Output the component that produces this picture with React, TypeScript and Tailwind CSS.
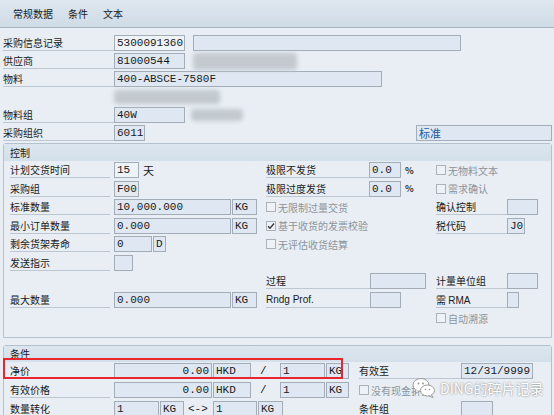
import React from 'react';

type FieldProps = {
  className?: string;
  children?: React.ReactNode;
  right?: boolean;
  tone?: 'blue' | 'gray' | 'light';
};

const Field = ({ className = '', children, right, tone = 'blue' }: FieldProps) => (
  <div
    className={`h-[16px] shrink-0 overflow-hidden whitespace-nowrap border border-[#a3adb7] px-[2px] font-['Liberation_Mono',monospace] text-[11px] leading-[14px] text-[#1a1a1a] ${
      right ? 'text-right' : ''
    } ${tone === 'gray' ? 'bg-[#e6eaee]' : tone === 'light' ? 'bg-[#eef3f8]' : 'bg-[#dfe8f2]'} ${className}`}
  >
    {children}
  </div>
);

const Label = ({ className = '', children }: { className?: string; children?: React.ReactNode }) => (
  <div
    className={`h-[16px] shrink-0 whitespace-nowrap border-b border-[#bcc7d2] text-[10px] leading-[15px] text-[#1a1a1a] ${className}`}
  >
    {children}
  </div>
);

const Check = ({ checked, children }: { checked?: boolean; children: React.ReactNode }) => (
  <div className="flex h-[18.5px] items-center">
    <div className="flex h-[10px] w-[10px] items-center justify-center border border-[#a9b2bb] bg-[#eef2f6]">
      {checked && (
        <svg width="8" height="8" viewBox="0 0 8 8">
          <path d="M1 4.2 L3 6.2 L7 1.5" fill="none" stroke="#333" strokeWidth="1.3" />
        </svg>
      )}
    </div>
    <span className="ml-[2px] text-[10px] leading-[15px] text-[#8d949b]">{children}</span>
  </div>
);

const Blur = ({ className = '' }: { className?: string }) => (
  <div className={`shrink-0 rounded-[4px] bg-[#c3c9cf] blur-[2px] ${className}`} />
);

const Row = ({ className = 'h-[18px]', children }: { className?: string; children?: React.ReactNode }) => (
  <div className={`flex items-center ${className}`}>{children}</div>
);

const SectionHead = ({ title, className = '' }: { title: string; className?: string }) => (
  <div
    className={`bg-gradient-to-b from-[#dde6ef] to-[#d3dfea] pl-[6px] text-[10px] text-[#1a1a1a] ${className}`}
  >
    {title}
  </div>
);

export default function App() {
  return (
    <div className="relative h-[415px] w-[554px] overflow-hidden bg-[#e8eef4] font-['Noto_Sans_CJK_SC',sans-serif]">
      {/* Tabs */}
      <div className="flex h-[28px] items-center gap-[15px] border-b border-[#a6b3c0] bg-gradient-to-b from-[#dfe7ef] to-[#cfdbe6] pl-[13px] text-[10px] text-[#1a1a1a]">
        <span>常规数据</span>
        <span>条件</span>
        <span>文本</span>
      </div>

      {/* Header data */}
      <div className="pl-[3px] pt-[6px]">
        <Row>
          <Label className="w-[111px]">采购信息记录</Label>
          <Field className="w-[71px]" tone="light">5300091360</Field>
          <Field className="ml-[8px] w-[268px]" />
        </Row>
        <Row>
          <Label className="w-[111px]">供应商</Label>
          <Field className="w-[71px]">81000544</Field>
          <Blur className="ml-[8px] h-[17px] w-[104px]" />
        </Row>
        <Row>
          <Label className="w-[111px]">物料</Label>
          <Field className="w-[268px]">400-ABSCE-7580F</Field>
        </Row>
        <Row>
          <div className="w-[111px]" />
          <Blur className="h-[14px] w-[106px]" />
        </Row>
        <Row>
          <Label className="w-[111px]">物料组</Label>
          <Field className="w-[71px]">40W</Field>
          <Blur className="ml-[6px] h-[12px] w-[52px]" />
        </Row>
        <Row>
          <Label className="w-[111px]">采购组织</Label>
          <Field className="w-[31px]">6011</Field>
          <Field className="ml-[271px] w-[136px] font-['Noto_Sans_CJK_SC',sans-serif] text-[10px] text-[#1e5a9c]">
            标准
          </Field>
        </Row>
      </div>

      {/* Control */}
      <div className="ml-[3px] mr-[2px] mt-[1px] rounded-t-[3px] border border-[#b4c2cf]">
        <SectionHead title="控制" className="h-[17px] leading-[17px]" />
        <div className="flex pb-[9px] pl-[6px]">
          <div className="w-[256px] shrink-0">
            <Row className="h-[18.5px]">
              <Label className="mr-[4px] w-[100px]">计划交货时间</Label>
              <Field className="w-[25px]" tone="light">15</Field>
              <span className="ml-[4px] text-[11px] text-[#1a1a1a]">天</span>
            </Row>
            <Row className="h-[18.5px]">
              <Label className="mr-[4px] w-[100px]">采购组</Label>
              <Field className="w-[25px]" tone="gray">F00</Field>
            </Row>
            <Row className="h-[18.5px]">
              <Label className="mr-[4px] w-[100px]">标准数量</Label>
              <Field className="w-[117px]">10,000.000</Field>
              <Field className="ml-[1px] w-[25px]">KG</Field>
            </Row>
            <Row className="h-[18.5px]">
              <Label className="mr-[4px] w-[100px]">最小订单数量</Label>
              <Field className="w-[117px]">0.000</Field>
              <Field className="ml-[1px] w-[25px]">KG</Field>
            </Row>
            <Row className="h-[18.5px]">
              <Label className="mr-[4px] w-[100px]">剩余货架寿命</Label>
              <Field className="w-[38px]">0</Field>
              <Field className="ml-[1px] w-[13px]">D</Field>
            </Row>
            <Row className="h-[18.5px]">
              <Label className="mr-[4px] w-[100px]">发送指示</Label>
              <Field className="w-[19px]" />
            </Row>
            <Row className="h-[18.5px]" />
            <Row className="h-[18.5px]">
              <Label className="mr-[4px] w-[100px]">最大数量</Label>
              <Field className="w-[117px]">0.000</Field>
              <Field className="ml-[1px] w-[25px]">KG</Field>
            </Row>
            <Row className="h-[18.5px]" />
          </div>

          <div className="w-[170px] shrink-0">
            <Row className="h-[18.5px]">
              <Label className="w-[103px]">极限不发货</Label>
              <Field className="w-[32px]">0.0</Field>
              <span className="ml-[4px] text-[9px] font-bold text-[#333]">%</span>
            </Row>
            <Row className="h-[18.5px]">
              <Label className="w-[103px]">极限过度发货</Label>
              <Field className="w-[32px]">0.0</Field>
              <span className="ml-[4px] text-[9px] font-bold text-[#333]">%</span>
            </Row>
            <Check>无限制过量交货</Check>
            <Check checked>基于收货的发票校验</Check>
            <Check>无评估收货结算</Check>
            <Row className="h-[18.5px]" />
            <Row className="h-[18.5px]">
              <Label className="w-[104px]">过程</Label>
              <Field className="w-[56px]" />
            </Row>
            <Row className="h-[18.5px]">
              <Label className="w-[104px] font-['Liberation_Sans',sans-serif]">Rndg Prof.</Label>
              <Field className="w-[31px]" />
            </Row>
          </div>

          <div className="flex-1">
            <Check>无物料文本</Check>
            <Check>需求确认</Check>
            <Row className="h-[18.5px]">
              <Label className="w-[71px]">确认控制</Label>
              <Field className="w-[31px]" />
            </Row>
            <Row className="h-[18.5px]">
              <Label className="w-[71px]">税代码</Label>
              <Field className="w-[18px]">J0</Field>
            </Row>
            <Row className="h-[18.5px]" />
            <Row className="h-[18.5px]" />
            <Row className="h-[18.5px]">
              <Label className="w-[71px]">计量单位组</Label>
              <Field className="w-[31px]" />
            </Row>
            <Row className="h-[18.5px]">
              <Label className="w-[71px]">
                需 <span className="font-['Liberation_Sans',sans-serif]">RMA</span>
              </Label>
              <Field className="w-[12px]" />
            </Row>
            <Check>自动溯源</Check>
          </div>
        </div>
      </div>

      {/* Conditions */}
      <div className="ml-[3px] mr-[2px] mt-[7px] rounded-t-[3px] border border-[#b4c2cf]">
        <SectionHead title="条件" className="h-[16px] leading-[16px]" />
        <div className="flex pl-[6px]">
          <div className="w-[349px] shrink-0">
            <Row className="h-[19px]">
              <Label className="mr-[4px] w-[100px]">净价</Label>
              <Field className="w-[98px]" right>0.00</Field>
              <Field className="ml-[1px] w-[38px]">HKD</Field>
              <span className="ml-[9px] w-[11px] font-['Liberation_Mono',monospace] text-[11px] text-[#1a1a1a]">/</span>
              <Field className="ml-[9px] w-[45px]">1</Field>
              <Field className="ml-[1px] w-[23px]">KG</Field>
            </Row>
            <Row className="h-[19px]">
              <Label className="mr-[4px] w-[100px]">有效价格</Label>
              <Field className="w-[98px]" right>0.00</Field>
              <Field className="ml-[1px] w-[38px]">HKD</Field>
              <span className="ml-[9px] w-[11px] font-['Liberation_Mono',monospace] text-[11px] text-[#1a1a1a]">/</span>
              <Field className="ml-[9px] w-[45px]">1</Field>
              <Field className="ml-[1px] w-[23px]">KG</Field>
            </Row>
            <Row className="h-[19px]">
              <Label className="mr-[4px] w-[100px]">数量转化</Label>
              <Field className="w-[45px]">1</Field>
              <Field className="ml-[1px] w-[24px]">KG</Field>
              <span className="ml-[4px] w-[25px] font-['Liberation_Mono',monospace] text-[11px] text-[#1a1a1a]">
                {'<->'}
              </span>
              <Field className="w-[44px]">1</Field>
              <Field className="ml-[1px] w-[25px]">KG</Field>
            </Row>
          </div>
          <div className="flex-1">
            <Row className="h-[19px]">
              <Label className="w-[102px]">有效至</Label>
              <Field className="w-[72px]">12/31/9999</Field>
            </Row>
            <div className="flex h-[19px] items-center">
              <Check>没有现金折扣</Check>
            </div>
            <Row className="h-[19px]">
              <Label className="w-[102px]">条件组</Label>
              <Field className="w-[32px]" />
            </Row>
          </div>
        </div>
      </div>

      {/* Highlight frame */}
      <div className="absolute left-[3px] top-[358px] h-[21px] w-[340px] border-2 border-[#e8262b]" />

      {/* Watermark */}
      <div className="absolute left-[412px] top-[377px] flex items-center">
        <svg width="24" height="21" viewBox="0 0 24 21">
          <ellipse cx="9" cy="8" rx="8" ry="6.5" fill="#fff" stroke="#9a9a9a" strokeWidth="1" />
          <path d="M4 13 L3 16.5 L7.5 14" fill="#fff" stroke="#9a9a9a" strokeWidth="1" />
          <ellipse cx="15.5" cy="13.5" rx="7" ry="5.5" fill="#fff" stroke="#9a9a9a" strokeWidth="1" />
          <path d="M19.5 18 L21 20.5 L17 19" fill="#fff" stroke="#9a9a9a" strokeWidth="1" />
          <circle cx="6.5" cy="6.5" r="1" fill="#9a9a9a" />
          <circle cx="11" cy="6.5" r="1" fill="#9a9a9a" />
          <circle cx="13.5" cy="12.5" r="0.8" fill="#9a9a9a" />
          <circle cx="17.5" cy="12.5" r="0.8" fill="#9a9a9a" />
        </svg>
        <span className="ml-[4px] text-[14px] leading-[18px] text-white [text-shadow:0_0_2px_rgba(0,0,0,0.55)]">
          DING的碎片记录
        </span>
      </div>
    </div>
  );
}
